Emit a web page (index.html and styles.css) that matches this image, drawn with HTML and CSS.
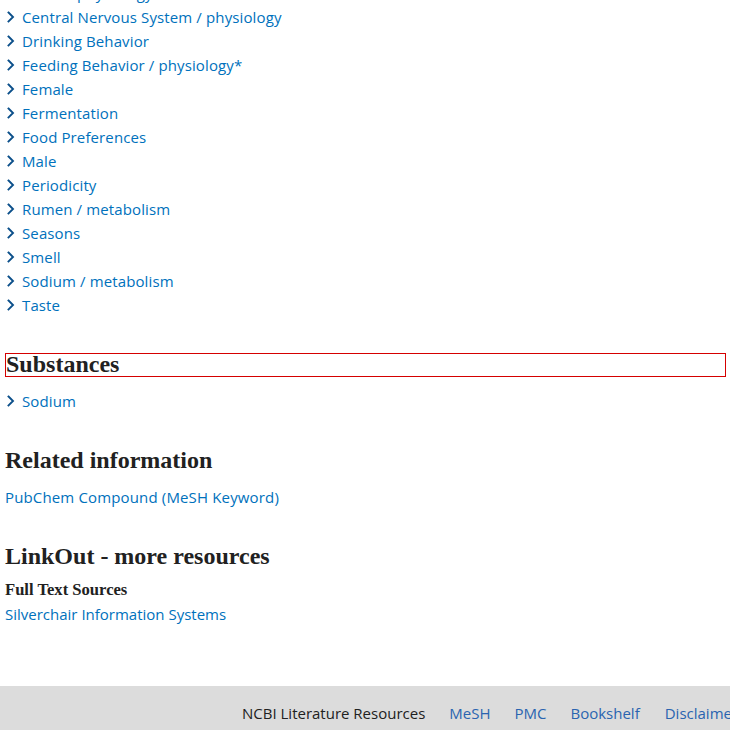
FILE: index.html
```html
<!DOCTYPE html>
<html lang="en">
<head>
<meta charset="utf-8">
<title>MeSH terms</title>
<link rel="stylesheet" href="styles.css">
</head>
<body>
<main class="page">
  <ul class="terms">
    <li><span class="chev"><svg viewBox="0 0 8 12" width="8" height="12"><polyline points="1.5,1.5 6,6 1.5,10.5"/></svg></span><a href="#">Cattle / physiology</a></li>
    <li><span class="chev"><svg viewBox="0 0 8 12" width="8" height="12"><polyline points="1.5,1.5 6,6 1.5,10.5"/></svg></span><a href="#">Central Nervous System / physiology</a></li>
    <li><span class="chev"><svg viewBox="0 0 8 12" width="8" height="12"><polyline points="1.5,1.5 6,6 1.5,10.5"/></svg></span><a href="#">Drinking Behavior</a></li>
    <li><span class="chev"><svg viewBox="0 0 8 12" width="8" height="12"><polyline points="1.5,1.5 6,6 1.5,10.5"/></svg></span><a href="#">Feeding Behavior / physiology*</a></li>
    <li><span class="chev"><svg viewBox="0 0 8 12" width="8" height="12"><polyline points="1.5,1.5 6,6 1.5,10.5"/></svg></span><a href="#">Female</a></li>
    <li><span class="chev"><svg viewBox="0 0 8 12" width="8" height="12"><polyline points="1.5,1.5 6,6 1.5,10.5"/></svg></span><a href="#">Fermentation</a></li>
    <li><span class="chev"><svg viewBox="0 0 8 12" width="8" height="12"><polyline points="1.5,1.5 6,6 1.5,10.5"/></svg></span><a href="#">Food Preferences</a></li>
    <li><span class="chev"><svg viewBox="0 0 8 12" width="8" height="12"><polyline points="1.5,1.5 6,6 1.5,10.5"/></svg></span><a href="#">Male</a></li>
    <li><span class="chev"><svg viewBox="0 0 8 12" width="8" height="12"><polyline points="1.5,1.5 6,6 1.5,10.5"/></svg></span><a href="#">Periodicity</a></li>
    <li><span class="chev"><svg viewBox="0 0 8 12" width="8" height="12"><polyline points="1.5,1.5 6,6 1.5,10.5"/></svg></span><a href="#">Rumen / metabolism</a></li>
    <li><span class="chev"><svg viewBox="0 0 8 12" width="8" height="12"><polyline points="1.5,1.5 6,6 1.5,10.5"/></svg></span><a href="#">Seasons</a></li>
    <li><span class="chev"><svg viewBox="0 0 8 12" width="8" height="12"><polyline points="1.5,1.5 6,6 1.5,10.5"/></svg></span><a href="#">Smell</a></li>
    <li><span class="chev"><svg viewBox="0 0 8 12" width="8" height="12"><polyline points="1.5,1.5 6,6 1.5,10.5"/></svg></span><a href="#">Sodium / metabolism</a></li>
    <li><span class="chev"><svg viewBox="0 0 8 12" width="8" height="12"><polyline points="1.5,1.5 6,6 1.5,10.5"/></svg></span><a href="#">Taste</a></li>
  </ul>

  <section class="block">
    <h2 class="heading focused">Substances</h2>
    <ul class="terms sub">
      <li><span class="chev"><svg viewBox="0 0 8 12" width="8" height="12"><polyline points="1.5,1.5 6,6 1.5,10.5"/></svg></span><a href="#">Sodium</a></li>
    </ul>
  </section>

  <section class="block">
    <h2 class="heading">Related information</h2>
    <a class="plain spaced" href="#">PubChem Compound (MeSH Keyword)</a>
  </section>

  <section class="block">
    <h2 class="heading">LinkOut - more resources</h2>
    <h3 class="subheading">Full Text Sources</h3>
    <a class="plain" href="#">Silverchair Information Systems</a>
  </section>
</main>

<footer class="footer">
  <span class="foot-title">NCBI Literature Resources</span>
  <a href="#">MeSH</a>
  <a href="#">PMC</a>
  <a href="#">Bookshelf</a>
  <a href="#">Disclaimer</a>
</footer>
</body>
</html>
```
FILE: styles.css
```css
html, body {
  margin: 0;
  padding: 0;
  background: #fff;
  overflow: hidden;
}
body {
  font-family: "Open Sans", "Noto Sans", sans-serif;
  color: #212121;
}
a {
  color: #0071bc;
  text-decoration: none;
}
.page {
  padding: 0 4px 0 5px;
}
.terms {
  list-style: none;
  margin: -19px 0 0 0;
  padding: 0;
}
.terms li {
  display: flex;
  align-items: center;
  height: 24px;
  font-size: 15px;
  letter-spacing: 0.12px;
}
.terms.sub {
  margin-top: 12px;
}
.chev {
  display: inline-flex;
  width: 17px;
  padding-left: 2px;
  box-sizing: border-box;
}
.chev svg {
  fill: none;
  stroke: #0b4f8a;
  stroke-width: 1.9;
  stroke-linecap: square;
  stroke-linejoin: miter;
}
.block {
  display: flex;
  flex-direction: column;
  align-items: flex-start;
}
.heading {
  font-family: "Liberation Serif", "Times New Roman", serif;
  font-weight: bold;
  font-size: 24px;
  line-height: 24px;
  margin: 35px 0 0 0;
  color: #212121;
  align-self: stretch;
}
.heading.focused {
  margin-top: 36px;
  line-height: 21px;
  padding-bottom: 1px;
  border: 1px solid #d50000;
}
.plain {
  font-size: 15px;
  line-height: 24px;
  margin-top: 13px;
}
.plain.spaced {
  letter-spacing: 0.15px;
}
.subheading {
  font-family: "Liberation Serif", "Times New Roman", serif;
  font-weight: bold;
  font-size: 16.6px;
  line-height: 20px;
  margin: 12px 0 0 0;
  color: #212121;
}
.subheading + .plain {
  margin-top: 2px;
}
.footer {
  margin-top: 60px;
  height: 44px;
  background: #dcdcdc;
  display: flex;
  align-items: center;
  gap: 24px;
  padding: 9px 0 0 242px;
  box-sizing: border-box;
  white-space: nowrap;
  font-size: 15px;
  overflow: hidden;
}
.foot-title {
  color: #212121;
}
.footer a {
  color: #2a64b0;
}
.footer a:last-child {
  margin-left: 1px;
}
```
